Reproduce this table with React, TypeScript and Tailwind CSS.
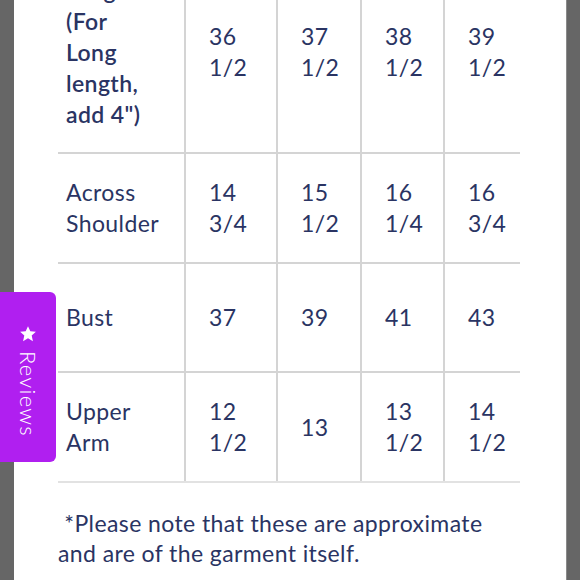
import React from 'react'

const rows = [
  {
    label: ['Length', '(For', 'Long', 'length,', 'add 4")'],
    bold: true,
    h: 'h-[202px]',
    values: [['36', '1/2'], ['37', '1/2'], ['38', '1/2'], ['39', '1/2']],
  },
  {
    label: ['Across', 'Shoulder'],
    h: 'h-[110px]',
    values: [['14', '3/4'], ['15', '1/2'], ['16', '1/4'], ['16', '3/4']],
  },
  {
    label: ['Bust'],
    h: 'h-[109px]',
    values: [['37'], ['39'], ['41'], ['43']],
  },
  {
    label: ['Upper', 'Arm'],
    h: 'h-[110px]',
    values: [['12', '1/2'], ['13'], ['13', '1/2'], ['14', '1/2']],
  },
]

const widths = ['w-[92px]', 'w-[84px]', 'w-[83px]', 'w-[77px]']

export default function App() {
  return (
    <div className="relative flex h-[580px] w-[580px] overflow-hidden bg-[#666666] font-['Lato','Noto_Sans',sans-serif] text-[#2a3463]">
      <div className="w-[14px] shrink-0 bg-[#666666]" />

      <div className="flex-1 bg-white pl-[44px]">
        {/* Size table */}
        <div className="-mt-[48px] w-[462px] text-[23px] leading-[31px] tracking-[0.4px]">
          {rows.map((row, i) => (
            <div
              key={i}
              className={`flex ${row.h} border-b-2 ${i === rows.length - 1 ? 'border-[#e2e2e2]' : 'border-[#d4d4d4]'}`}
            >
              <div className={`flex w-[126px] flex-col justify-center pl-[8px] ${row.bold ? 'font-semibold' : ''}`}>
                {row.label.map((l) => (
                  <span key={l}>{l}</span>
                ))}
              </div>
              {row.values.map((v, j) => (
                <div
                  key={j}
                  className={`flex ${widths[j]} flex-col justify-center border-l-2 border-[#d4d4d4] pl-[23px]`}
                >
                  {v.map((t, k) => (
                    <span key={k}>{t}</span>
                  ))}
                </div>
              ))}
            </div>
          ))}
        </div>

        {/* Footnote */}
        <p className="mt-[25px] text-[23px] leading-[30px] tracking-[0.4px] whitespace-pre">
          {' *Please note that these are approximate'}
          <br />
          and are of the garment itself.
        </p>
      </div>

      <div className="w-[14px] shrink-0 border-l border-[#8a8a8a] bg-[#666666]" />

      {/* Reviews tab */}
      <div className="absolute left-0 top-[292px] flex h-[170px] w-[56px] flex-col items-center rounded-r-[6px] bg-[#b01ff0] pt-[33px] text-white">
        <svg width="18" height="18" viewBox="0 0 24 24" fill="white">
          <path d="M12 1.5l3.1 6.9 7.4.7-5.6 5 1.7 7.4L12 17.6l-6.6 3.9 1.7-7.4-5.6-5 7.4-.7z" />
        </svg>
        <span className="mt-[8px] text-[22px] leading-none font-light tracking-[1.2px] [writing-mode:vertical-rl]">
          Reviews
        </span>
      </div>
    </div>
  )
}
